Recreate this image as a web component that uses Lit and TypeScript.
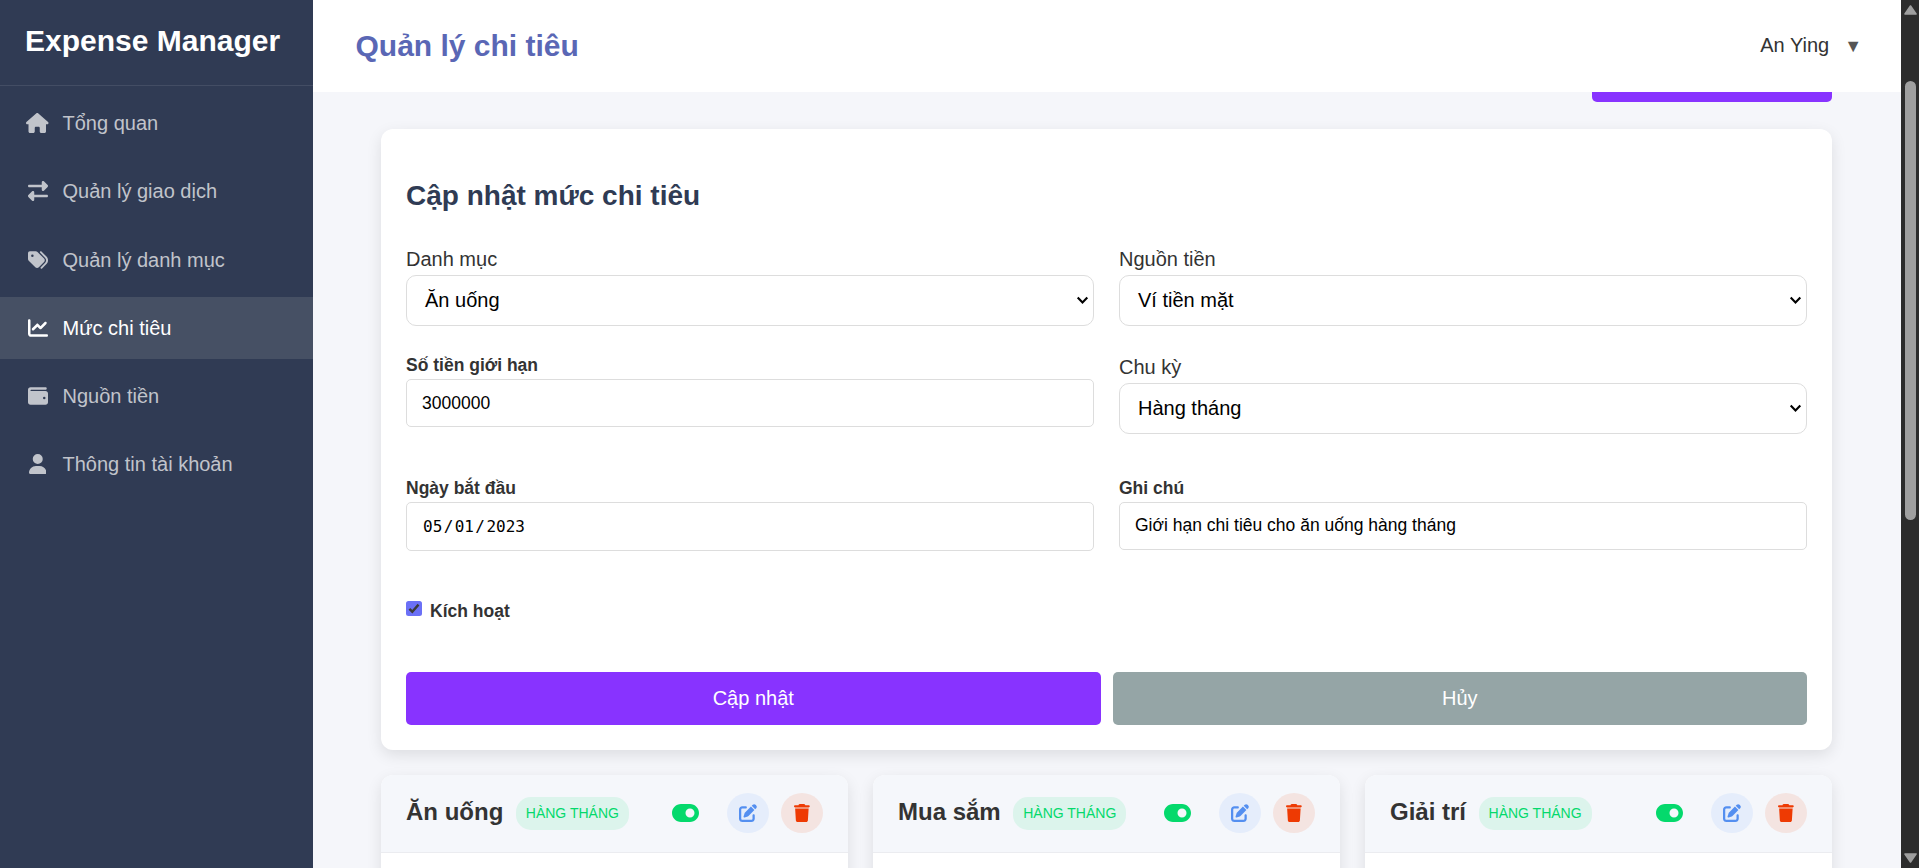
import { LitElement, html, css, svg } from "lit";
import { customElement, property } from "lit/decorators.js";
import { classMap } from "lit/directives/class-map.js";

const ICONS: Record<string, { w: number; d: string }> = {
  house: { w: 576, d: "M575.8 255.5c0 18-15 32.1-32 32.1h-32l.7 160.2c0 2.7-.2 5.4-.5 8.1V472c0 22.1-17.9 40-40 40H456c-1.1 0-2.2 0-3.3-.1c-1.4 .1-2.8 .1-4.2 .1H416 392c-22.1 0-40-17.9-40-40V448 384c0-17.7-14.3-32-32-32H256c-17.7 0-32 14.3-32 32v64 24c0 22.1-17.9 40-40 40H160 128.1c-1.5 0-3-.1-4.5-.2c-1.2 .1-2.4 .2-3.6 .2H104c-22.1 0-40-17.9-40-40V360c0-.9 0-1.9 .1-2.8V287.6H32c-18 0-32-14-32-32.1c0-9 3-17 10-24L266.4 8c7-7 15-8 22-8s15 2 21 7L564.8 231.5c8 7 12 15 11 24z" },
  exchange: { w: 512, d: "M32 96l320 0V32c0-12.9 7.8-24.6 19.8-29.6s25.7-2.2 34.9 6.9l96 96c6 6 9.4 14.1 9.4 22.6s-3.4 16.6-9.4 22.6l-96 96c-9.2 9.2-22.9 11.9-34.9 6.9s-19.8-16.6-19.8-29.6V160L32 160c-17.7 0-32-14.3-32-32s14.3-32 32-32zM480 352c17.7 0 32 14.3 32 32s-14.3 32-32 32H160v64c0 12.9-7.8 24.6-19.8 29.6s-25.7 2.2-34.9-6.9l-96-96c-6-6-9.4-14.1-9.4-22.6s3.4-16.6 9.4-22.6l96-96c9.2-9.2 22.9-11.9 34.9-6.9s19.8 16.6 19.8 29.6l0 64H480z" },
  tags: { w: 512, d: "M345 39.1L472.8 168.4c52.4 53 52.4 138.2 0 191.2L360.8 472.9c-9.3 9.4-24.5 9.5-33.9 .2s-9.5-24.5-.2-33.9L438.6 325.9c33.9-34.3 33.9-89.4 0-123.7L310.9 72.9c-9.3-9.4-9.2-24.6 .2-33.9s24.6-9.2 33.9 .2zM0 229.5V80C0 53.5 21.5 32 48 32H197.5c17 0 33.3 6.7 45.3 18.7l168 168c25 25 25 65.5 0 90.5L277.3 442.7c-25 25-65.5 25-90.5 0l-168-168C6.7 262.7 0 246.5 0 229.5zM144 144a32 32 0 1 0 -64 0 32 32 0 1 0 64 0z" },
  chart: { w: 512, d: "M64 64c0-17.7-14.3-32-32-32S0 46.3 0 64V400c0 44.2 35.8 80 80 80H480c17.7 0 32-14.3 32-32s-14.3-32-32-32H80c-8.8 0-16-7.2-16-16V64zm406.6 86.6c12.5-12.5 12.5-32.8 0-45.3s-32.8-12.5-45.3 0L320 210.7l-57.4-57.4c-12.5-12.5-32.8-12.5-45.3 0l-112 112c-12.5 12.5-12.5 32.8 0 45.3s32.8 12.5 45.3 0L240 221.3l57.4 57.4c12.5 12.5 32.8 12.5 45.3 0l128-128z" },
  wallet: { w: 512, d: "M64 32C28.7 32 0 60.7 0 96V416c0 35.3 28.7 64 64 64H448c35.3 0 64-28.7 64-64V192c0-35.3-28.7-64-64-64H80c-8.8 0-16-7.2-16-16s7.2-16 16-16H448c17.7 0 32-14.3 32-32s-14.3-32-32-32H64zM416 272a32 32 0 1 1 0 64 32 32 0 1 1 0-64z" },
  user: { w: 448, d: "M224 256A128 128 0 1 0 224 0a128 128 0 1 0 0 256zm-45.7 48C79.8 304 0 383.8 0 482.3C0 498.7 13.3 512 29.7 512H418.3c16.4 0 29.7-13.3 29.7-29.7C448 383.8 368.2 304 269.7 304H178.3z" },
  toggle: { w: 576, d: "M192 64C86 64 0 150 0 256S86 448 192 448H384c106 0 192-86 192-192s-86-192-192-192H192zm192 96a96 96 0 1 1 0 192 96 96 0 1 1 0-192z" },
  edit: { w: 512, d: "M471.6 21.7c-21.9-21.9-57.3-21.9-79.2 0L362.3 51.7l97.9 97.9 30.1-30.1c21.9-21.9 21.9-57.3 0-79.2L471.6 21.7zm-299.2 220c-6.1 6.1-10.8 13.6-13.5 21.9l-29.6 88.8c-2.9 8.6-.6 18.1 5.8 24.6s15.9 8.7 24.6 5.8l88.8-29.6c8.2-2.7 15.7-7.4 21.9-13.5L437.7 172.3 339.7 74.3 172.4 241.7zM96 64C43 64 0 107 0 160V416c0 53 43 96 96 96H352c53 0 96-43 96-96V320c0-17.7-14.3-32-32-32s-32 14.3-32 32v96c0 17.7-14.3 32-32 32H96c-17.7 0-32-14.3-32-32V160c0-17.7 14.3-32 32-32h96c17.7 0 32-14.3 32-32s-14.3-32-32-32H96z" },
  trash: { w: 448, d: "M135.2 17.7L128 32H32C14.3 32 0 46.3 0 64S14.3 96 32 96H416c17.7 0 32-14.3 32-32s-14.3-32-32-32H320l-7.2-14.3C307.4 6.8 296.3 0 284.2 0H163.8c-12.1 0-23.2 6.8-28.6 17.7zM416 128H32L53.2 467c1.6 25.3 22.6 45 47.9 45H346.9c25.3 0 46.3-19.7 47.9-45L416 128z" },
};

/** Solid glyph that is one em high. */
const icon = (name: string) => {
  const { w, d } = ICONS[name];
  return html`<svg class="icon" viewBox="0 0 ${w} 512" width="${w / 512}em" height="1em" aria-hidden="true">${svg`<path fill="currentColor" d=${d}></path>`}</svg>`;
};

@customElement("side-bar")
class SideBar extends LitElement {
  static styles = css`
    :host { display: flex; flex-direction: column; width: 313px; flex: none; background: #303b54; color: #fff; }
    .brand { height: 61px; border-bottom: 1px solid #434d64; padding: 24px 25px 0; font-weight: 700; font-size: 30px; line-height: 34px; white-space: nowrap; }
    .menu { list-style: none; margin: 0; padding: 6px 0 0; display: flex; flex-direction: column; gap: 6.25px; }
    .item { display: flex; align-items: center; height: 62px; padding: 0 25px; gap: 12.5px; font-size: 20px; line-height: 24px; color: #c1c4cb; }
    .active { background: #465064; color: #fff; }
    .slot { width: 25px; display: flex; justify-content: center; }
    .icon { display: block; }
  `;
  items = [
    ["house", "Tổng quan"],
    ["exchange", "Quản lý giao dịch"],
    ["tags", "Quản lý danh mục"],
    ["chart", "Mức chi tiêu"],
    ["wallet", "Nguồn tiền"],
    ["user", "Thông tin tài khoản"],
  ];
  render() {
    return html`
      <div class="brand">Expense Manager</div>
      <ul class="menu">
        ${this.items.map(([ic, label]) => html`
          <li class=${classMap({ item: true, active: ic === "chart" })}>
            <span class="slot">${icon(ic)}</span><span>${label}</span>
          </li>`)}
      </ul>`;
  }
}

@customElement("select-field")
class SelectField extends LitElement {
  @property() label = "";
  @property() value = "";
  static styles = css`
    :host { display: block; }
    .label { display: block; font-size: 20px; line-height: 24px; margin-bottom: 4px; color: #333; }
    .box { box-sizing: border-box; height: 51px; border: 1px solid #ddd; border-radius: 10px; background: #fff; color: #000; font-size: 20px; display: flex; align-items: center; justify-content: space-between; padding: 0 4px 0 18px; }
  `;
  render() {
    return html`
      <span class="label">${this.label}</span>
      <div class="box" role="combobox">
        <span>${this.value}</span>
        <svg width="13" height="9" viewBox="0 0 13 9"><path d="M1.7 1.5 6.5 6.5 11.3 1.5" fill="none" stroke="#000" stroke-width="2.1"></path></svg>
      </div>`;
  }
}

@customElement("budget-form")
class BudgetForm extends LitElement {
  static styles = css`
    :host { display: block; box-sizing: border-box; height: 621px; background: #fff; border-radius: 12px; padding: 50px 25px 0; box-shadow: 0 5px 15px rgba(0, 0, 0, 0.1); }
    .title { margin: 0 0 34px; font-size: 28px; line-height: 34px; font-weight: 700; color: #2f3b54; }
    .grid { display: grid; grid-template-columns: 1fr 1fr; column-gap: 25px; grid-template-rows: 108px 123px 123px 20px; }
    .label { display: block; font-size: 17.5px; line-height: 20px; font-weight: 700; margin-bottom: 4px; color: #333; }
    .input { box-sizing: border-box; display: block; width: 100%; height: 48px; border: 1px solid #ddd; border-radius: 5px; padding: 0 15px; background: #fff; color: #000; font-family: inherit; font-size: 17.5px; outline: none; }
    .note { padding-bottom: 2px; }
    .date { height: 49px; padding: 0 16px 1px; display: flex; align-items: center; font-family: "DejaVu Sans Mono", monospace; font-size: 16px; }
    .sep { padding: 0 1.4px; }
    .check { display: flex; gap: 8px; }
    .check .label { margin: 0; }
    .tick { width: 16px; height: 15px; border-radius: 2.5px; background: #6b70f6; display: block; }
    .actions { display: grid; grid-template-columns: 1fr 1fr; gap: 12px; margin-top: 51px; }
    .btn { height: 53px; border: 0; border-radius: 5px; font: 20px "Liberation Sans", Arial, sans-serif; color: #fff; background: #8833ff; padding: 0 0 1px; }
    .cancel { background: #95a5a6; }
  `;
  render() {
    return html`
      <h2 class="title">Cập nhật mức chi tiêu</h2>
      <div class="grid">
        <select-field label="Danh mục" value="Ăn uống"></select-field>
        <select-field label="Nguồn tiền" value="Ví tiền mặt"></select-field>
        <div><span class="label">Số tiền giới hạn</span><input class="input" value="3000000" /></div>
        <select-field label="Chu kỳ" value="Hàng tháng"></select-field>
        <div>
          <span class="label">Ngày bắt đầu</span>
          <div class="input date"><span>05</span><span class="sep">/</span><span>01</span><span class="sep">/</span><span>2023</span></div>
        </div>
        <div><span class="label">Ghi chú</span><input class="input note" value="Giới hạn chi tiêu cho ăn uống hàng tháng" /></div>
        <div class="check">
          <svg class="tick" viewBox="0 0 16 15"><path d="M3.4 7.8 6.3 10.7 12.5 3.6" fill="none" stroke="#3b3b3b" stroke-width="2.4"></path></svg>
          <span class="label">Kích hoạt</span>
        </div>
      </div>
      <div class="actions">
        <button class="btn">Cập nhật</button>
        <button class="btn cancel">Hủy</button>
      </div>`;
  }
}

@customElement("budget-card")
class BudgetCard extends LitElement {
  @property() name = "";
  @property() period = "";
  static styles = css`
    :host { display: block; height: 240px; background: #fff; border-radius: 12px; overflow: hidden; box-shadow: 0 5px 15px rgba(0, 0, 0, 0.1); }
    .head { display: flex; align-items: center; box-sizing: border-box; height: 78px; padding: 0 25px 1px; background: #f5f7fb; border-bottom: 1px solid #ebecf0; }
    .name { font-size: 24px; line-height: 28px; padding-bottom: 2px; font-weight: 700; color: #333; white-space: nowrap; }
    .badge { margin-left: 12.5px; padding: 0 10px; height: 33px; line-height: 32px; border-radius: 15px; background: #dcf4ec; color: #04d96c; font-size: 14px; white-space: nowrap; }
    .tools { margin-left: auto; display: flex; align-items: center; gap: 12px; }
    .tool { width: 42px; height: 40px; border-radius: 50%; display: flex; align-items: center; justify-content: center; font-size: 18px; }
    .toggle { width: 59px; font-size: 24px; color: #04d96c; }
    .edit { background: #e5edfb; color: #548ff0; }
    .trash { background: #f4e4e1; color: #ee3a03; }
    .icon { display: block; }
  `;
  render() {
    return html`
      <div class="head">
        <span class="name">${this.name}</span>
        <span class="badge">${this.period}</span>
        <div class="tools">
          <span class="tool toggle">${icon("toggle")}</span>
          <span class="tool edit">${icon("edit")}</span>
          <span class="tool trash">${icon("trash")}</span>
        </div>
      </div>`;
  }
}

@customElement("app-root")
class AppRoot extends LitElement {
  static styles = css`
    :host { display: flex; height: 868px; overflow: hidden; background: #f5f6fa; color: #333; font-family: "Liberation Sans", Arial, sans-serif; }
    .main { flex: 1; min-width: 0; display: flex; flex-direction: column; }
    .topbar { flex: none; box-sizing: border-box; height: 92px; background: #fff; display: flex; justify-content: space-between; align-items: center; padding: 0 39px 0 42.5px; }
    .title { margin: 0; font-size: 30px; line-height: 34px; font-weight: 700; color: #5a67b5; }
    .account { display: flex; align-items: center; font-size: 20px; gap: 15px; padding-bottom: 1px; }
    .caret { font-size: 18px; line-height: 20px; color: #555; }
    .content { flex: 1; min-height: 0; overflow: hidden; padding: 0 69px 0 68px; }
    .add { height: 10px; width: 240px; margin-left: auto; background: #8833ff; border-radius: 0 0 5px 5px; margin-bottom: 27px; }
    .cards { display: grid; grid-template-columns: repeat(3, 1fr); gap: 25px; margin-top: 25px; }
    .scroll { flex: none; width: 18px; background: #2c2c2c; display: flex; flex-direction: column; align-items: center; box-sizing: border-box; padding: 5px 0 5px 1px; }
    .arrow { display: block; }
    .thumb { width: 11px; height: 439px; margin: 66px 0 auto; border-radius: 6px; background: #9f9f9f; }
  `;
  render() {
    return html`
      <side-bar></side-bar>
      <div class="main">
        <header class="topbar">
          <h1 class="title">Quản lý chi tiêu</h1>
          <div class="account"><span>An Ying</span><span class="caret">▼</span></div>
        </header>
        <div class="content">
          <div class="add"></div>
          <budget-form></budget-form>
          <div class="cards">
            ${["Ăn uống", "Mua sắm", "Giải trí"].map((n) => html`<budget-card name=${n} period="HÀNG THÁNG"></budget-card>`)}
          </div>
        </div>
      </div>
      <div class="scroll">
        <svg class="arrow" width="13" height="10" viewBox="0 0 13 10"><path d="M6.5 1 12 9H1Z" fill="#9f9f9f" stroke="#9f9f9f" stroke-width="1.6" stroke-linejoin="round"></path></svg>
        <div class="thumb"></div>
        <svg class="arrow" width="13" height="10" viewBox="0 0 13 10"><path d="M6.5 9 12 1H1Z" fill="#9f9f9f" stroke="#9f9f9f" stroke-width="1.6" stroke-linejoin="round"></path></svg>
      </div>`;
  }
}
